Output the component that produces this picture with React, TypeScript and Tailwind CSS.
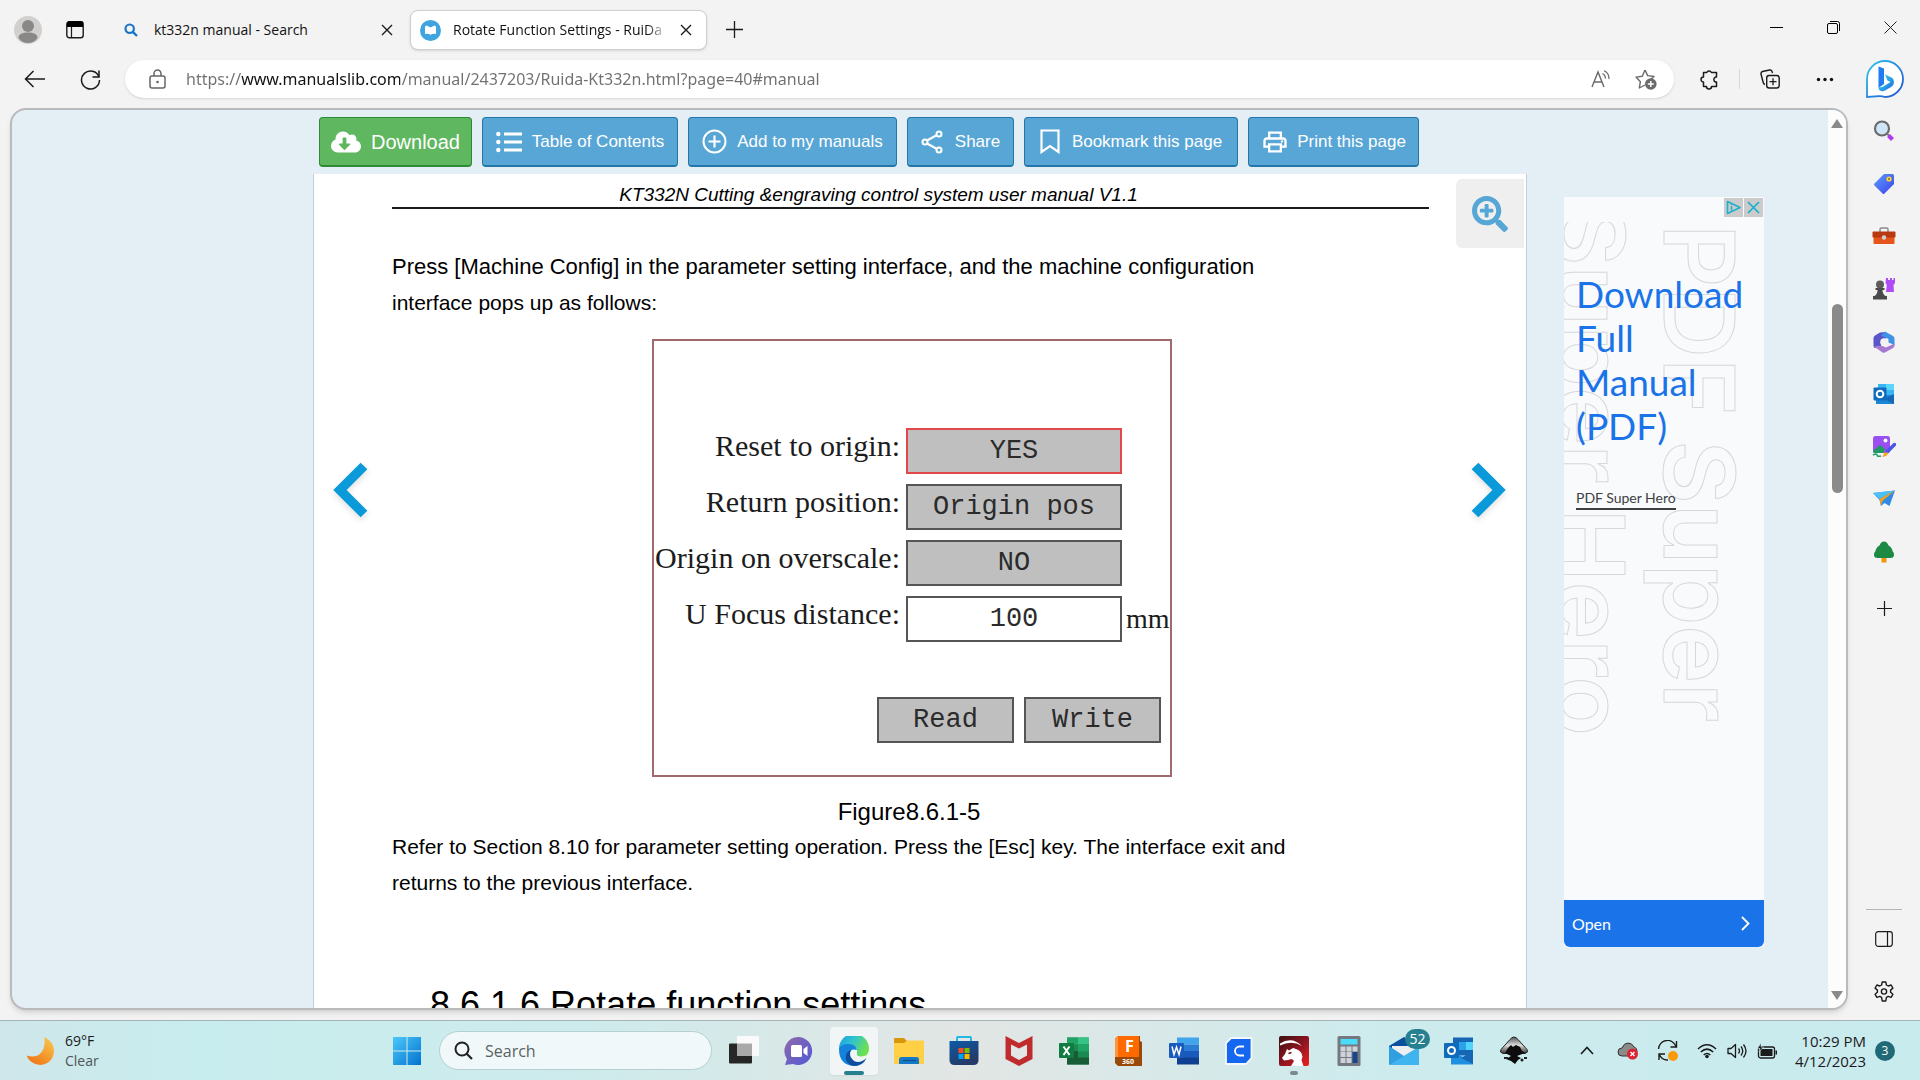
import type { ReactNode } from "react";
import { FaCloudDownloadAlt, FaSearchPlus } from "react-icons/fa";
import { MdOutlinePrint } from "react-icons/md";

function Svg({ w, h = w, children }: { w: number; h?: number; children: ReactNode }) {
  return (
    <svg width={w} height={h} viewBox={`0 0 ${w} ${h}`} fill="none" aria-hidden="true" className="shrink-0">
      {children}
    </svg>
  );
}

/* ---------- browser chrome ---------- */

function CloseIcon() {
  return (
    <Svg w={12}>
      <path d="M1 1l10 10M11 1L1 11" stroke="#1b1b1b" strokeWidth="1.4" />
    </Svg>
  );
}

function TabStrip() {
  return (
    <header className="flex h-14 shrink-0 items-start">
      <button type="button" aria-label="Profile" className="mt-4 ml-3.5">
        <Svg w={28}>
          <circle cx="14" cy="14" r="14" fill="#d2d0ce" />
          <circle cx="14" cy="10" r="6" fill="#8a8886" />
          <path d="M4.5 22c0-4 4-5.500 9.500-5.500s9.500 1.500 9.500 5.500c-2 3.500-5.500 5-9.500 5s-7.500-1.500-9.500-5z" fill="#8a8886" />
        </Svg>
      </button>
      <button type="button" aria-label="Tab actions" className="mt-5 ml-6">
        <Svg w={18} h={19}>
          <rect x="0.8" y="1.800" width="16.400" height="16" rx="2.500" stroke="#1b1b1b" strokeWidth="1.4" />
          <path d="M1 3.500Q1 1 3.500 1h11Q17 1 17 3.500V7H1z" fill="#000" />
          <path d="M5.500 7v11" stroke="#1b1b1b" strokeWidth="1.2" />
        </Svg>
      </button>

      <div className="mt-2.5 flex h-10 w-[326px] items-center pr-[17px] pl-10">
        <Svg w={14}>
          <circle cx="5.700" cy="5.700" r="4.200" stroke="#1a74c9" strokeWidth="2.200" />
          <path d="M8.800 8.800l4.200 4.200" stroke="#1a74c9" strokeWidth="2.400" />
        </Svg>
        <span className="ml-4 flex-1 text-sm whitespace-nowrap">kt332n manual - Search</span>
        <button type="button" aria-label="Close tab">
          <CloseIcon />
        </button>
      </div>

      <div className="mt-2.5 flex h-10 w-[297px] items-center rounded-lg border border-[#cfcfcf] bg-white px-[9px] shadow-sm">
        <Svg w={21}>
          <circle cx="10.500" cy="10.500" r="10.500" fill="#3fa4e0" />
          <path d="M5 6.500l1.500-1 4 2 4-2 1.500 1V14q-3-.8-5.500.8Q8 13.200 5 14z" fill="#fff" />
        </Svg>
        <span className="ml-3 flex-1 overflow-hidden text-sm font-medium whitespace-nowrap [mask-image:linear-gradient(to_right,#000_90%,transparent)]">
          Rotate Function Settings - RuiDa
        </span>
        <button type="button" aria-label="Close tab" className="mr-[5px] ml-3">
          <CloseIcon />
        </button>
      </div>
      <button type="button" aria-label="New tab" className="mt-[21px] ml-[19px]">
        <Svg w={17}>
          <path d="M8.500 0v17M0 8.500h17" stroke="#1b1b1b" strokeWidth="1.300" />
        </Svg>
      </button>

      <div className="mt-[21px] mr-[23px] ml-auto flex items-center gap-11">
        <button type="button" aria-label="Minimize">
          <Svg w={13}>
            <path d="M0 6.500h13" stroke="#000" />
          </Svg>
        </button>
        <button type="button" aria-label="Restore">
          <Svg w={13}>
            <rect x="0.500" y="2.500" width="10" height="10" rx="1.500" stroke="#000" />
            <path d="M3 .5h7.500q2 0 2 2V10" stroke="#000" />
          </Svg>
        </button>
        <button type="button" aria-label="Close window">
          <Svg w={13}>
            <path d="M.5.5l12 12M12.500.5l-12 12" stroke="#222" />
          </Svg>
        </button>
      </div>
    </header>
  );
}

function BingIcon() {
  return (
    <Svg w={38}>
      <defs>
        <linearGradient id="bingRing" x1="0" y1="0" x2="1" y2="1">
          <stop offset="0" stopColor="#2fc8f0" />
          <stop offset="1" stopColor="#1b4fd0" />
        </linearGradient>
        <linearGradient id="bingB" x1="0" y1="0" x2="1" y2="1">
          <stop offset="0" stopColor="#2ad0e0" />
          <stop offset="0.500" stopColor="#28a8e8" />
          <stop offset="1" stopColor="#1d5fe0" />
        </linearGradient>
      </defs>
      <path d="M1 37V19A18 18 0 1 1 19 37q-3-1-6-.8T1 37z" fill="#fff" stroke="url(#bingRing)" strokeWidth="1.800" />
      <path d="M12.500 6.500l5.500 2v15.500l-5.500 4z" fill="#1f7cf2" />
      <path d="M12.500 27.500c0 4 4 4.500 7 2.800l6-3.500c3.500-2.500 3-7.500 0-9.300l-6.500-3 2.500 6 3 1.500-8 5z" fill="url(#bingB)" />
    </Svg>
  );
}

function AddressBar() {
  return (
    <div className="flex h-[46px] shrink-0 items-center">
      <button type="button" aria-label="Back" className="ml-6">
        <Svg w={21} h={18}>
          <path d="M9.500 1L1.500 9l8 8M1.500 9H21" stroke="#1b1b1b" strokeWidth="1.500" />
        </Svg>
      </button>
      <button type="button" aria-label="Refresh" className="ml-[35px]">
        <Svg w={21}>
          <path d="M19 8A9 9 0 1 0 19.500 11" stroke="#1b1b1b" strokeWidth="1.500" />
          <path d="M19 1.500V8h-6.500" stroke="#1b1b1b" strokeWidth="1.500" />
        </Svg>
      </button>

      <div className="ml-6 flex h-[38px] flex-1 items-center rounded-full bg-white pr-[17px] pl-6 shadow-sm">
        <Svg w={17} h={20}>
          <rect x="1" y="7" width="15" height="12" rx="2" stroke="#666" strokeWidth="1.500" />
          <path d="M5 7V4.500a3.500 3.500 0 0 1 7 0V7" stroke="#666" strokeWidth="1.500" />
          <circle cx="8.500" cy="13" r="1.300" fill="#666" />
        </Svg>
        <input
          aria-label="Address"
          readOnly
          value="https://www.manualslib.com/manual/2437203/Ruida-Kt332n.html?page=40#manual"
          className="ml-5 min-w-0 flex-1 bg-[linear-gradient(to_right,#707070_55px,#111_55px,#111_214px,#707070_214px)] bg-clip-text font-['Noto_Sans',sans-serif] text-base text-transparent outline-none"
        />
        <button type="button" aria-label="Read aloud" className="mr-6">
          <Svg w={20} h={18}>
            <path d="M1 17L7 2l6 15M3 12h8" stroke="#6a6a6a" strokeWidth="1.400" />
            <path d="M11.500 3.500q3 1.500 3 5M13 .8q5 2 5 8.200" stroke="#6a6a6a" strokeWidth="1.200" />
          </Svg>
        </button>
        <button type="button" aria-label="Add to favorites">
          <Svg w={22} h={21}>
            <path d="M10 1l2.700 5.600 6.300.9-3 2.800M10 16l-5.700 3 1.100-6.300L1 8.100l6.300-.9L10 1" stroke="#6a6a6a" strokeWidth="1.400" strokeLinejoin="round" />
            <circle cx="15.800" cy="15" r="5.800" fill="#6a6a6a" />
            <path d="M15.800 12v6M12.800 15h6" stroke="#fff" strokeWidth="1.400" />
          </Svg>
        </button>
      </div>

      <div className="ml-[25px] flex items-center">
        <button type="button" aria-label="Extensions">
          <Svg w={20} h={21}>
            <path
              d="M4.500 3.500h3.300a2.500 2.500 0 0 1 4.600 0H17.500V8h-.8a2.600 2.600 0 0 0 0 5h.8v4.500h-5a2.500 2.500 0 0 1-5 0h-3V13a2.500 2.500 0 0 1 0-5z"
              stroke="#1b1b1b"
              strokeWidth="1.500"
              strokeLinejoin="round"
            />
          </Svg>
        </button>
        <span className="ml-5 h-5 w-px bg-[#d8d8d8]" />
        <button type="button" aria-label="Collections" className="ml-5">
          <Svg w={20}>
            <path d="M5 15.500Q3.500 15 3.200 13.500L1 5q-.3-2 1.500-2.500L9.500 1q2-.4 2.600 1.600l.4 1.400" stroke="#1b1b1b" strokeWidth="1.400" />
            <rect x="6.700" y="6.500" width="12.500" height="12.500" rx="2.500" stroke="#1b1b1b" strokeWidth="1.400" />
            <path d="M13 9.200v7M9.500 12.700h7" stroke="#1b1b1b" strokeWidth="1.300" />
          </Svg>
        </button>
        <button type="button" aria-label="More" className="ml-9">
          <Svg w={18} h={5}>
            <circle cx="2.500" cy="2.500" r="1.700" fill="#111" />
            <circle cx="9" cy="2.500" r="1.700" fill="#111" />
            <circle cx="15.500" cy="2.500" r="1.700" fill="#111" />
          </Svg>
        </button>
        <button type="button" aria-label="Bing chat" className="mr-4 ml-8">
          <BingIcon />
        </button>
      </div>
    </div>
  );
}

const sidebarApps: { name: string; icon: ReactNode }[] = [
  {
    name: "Search",
    icon: (
      <Svg w={22}>
        <circle cx="9" cy="8.500" r="7" fill="#cfe6f8" stroke="#6b6b6b" strokeWidth="2.200" />
        <path d="M13.500 13.500l2.500 2" stroke="#777" strokeWidth="2" />
        <path d="M15.500 15.500l4 4" stroke="#b13af0" strokeWidth="4" />
      </Svg>
    ),
  },
  {
    name: "Shopping",
    icon: (
      <Svg w={22}>
        <defs>
          <linearGradient id="tag" x1="0" y1="0" x2="1" y2="1">
            <stop stopColor="#5aa0f8" />
            <stop offset="1" stopColor="#3d3ff0" />
          </linearGradient>
        </defs>
        <path d="M11 1h8.500q1.500 0 1.500 1.500V11L11.500 20.500q-1 1-2 0l-8-8q-1-1 0-2z" fill="url(#tag)" />
        <circle cx="16" cy="6" r="2.600" fill="#ffd23c" />
        <circle cx="16" cy="6" r="1" fill="#7a7020" />
      </Svg>
    ),
  },
  {
    name: "Tools",
    icon: (
      <Svg w={24} h={22}>
        <path d="M8 7V4.500Q8 3 9.500 3h5Q16 3 16 4.500V7" stroke="#8b8b8b" strokeWidth="1.500" />
        <rect x="1.500" y="9" width="21" height="10" rx="1" fill="#e4541b" />
        <rect x="0.500" y="6.500" width="23" height="6" rx="1" fill="#b83810" />
        <circle cx="12" cy="12.500" r="2.200" fill="#d0d0d0" />
      </Svg>
    ),
  },
  {
    name: "Games",
    icon: (
      <Svg w={24}>
        <path d="M14 1h2v2h2V1h2v2h1.500V1H23v5l-1.500 2 .5 7h-8l.8-7L13.500 6z" fill="#b04cf5" />
        <circle cx="8" cy="7.500" r="4" fill="#5c5c5c" />
        <path d="M3.500 11h9v2h-2q0 4 3 6H15v3.500H1V19h1.500q3-2 3-6h-2z" fill="#4a4a4a" />
      </Svg>
    ),
  },
  {
    name: "Microsoft 365",
    icon: (
      <Svg w={22}>
        <path d="M7 1.500L13 1v7L8 10.500V15l-6.500 2Q.5 16 .5 14.500V7q0-1.500 1.500-2.500z" fill="#5a55c8" />
        <path d="M12 .5l8 4.500q1.500 1 1.500 2.500V14l-6-2.500V8L8 4.500z" fill="#3f92e6" />
        <path d="M1 15.500l7-1 5 2 8.500-4v2.500q0 1-1.500 2l-8 4.500q-1.500.7-2.500 0z" fill="#a77ad2" />
        <circle cx="11" cy="11" r="3.800" fill="#f3f3f3" />
      </Svg>
    ),
  },
  {
    name: "Outlook",
    icon: (
      <Svg w={22}>
        <rect x="5" y="1" width="16" height="13" fill="#37b6f2" />
        <rect x="13" y="1" width="8" height="6" fill="#5ad6fb" />
        <path d="M3 12h18v9H3z" fill="#1a86d6" />
        <path d="M21 11v10L11 16z" fill="#1368b8" />
        <rect x="0.500" y="4.500" width="13" height="13" rx="1" fill="#0f6cbd" />
        <circle cx="7" cy="11" r="3.300" stroke="#fff" strokeWidth="2" />
      </Svg>
    ),
  },
  {
    name: "Image Creator",
    icon: (
      <Svg w={24}>
        <rect x="1" y="1" width="17" height="17" rx="2.500" fill="#9a4ff0" />
        <path d="M1 16l7-6 5 4-2 4H3q-2 0-2-2z" fill="#1e9a63" />
        <circle cx="13.500" cy="5.500" r="2" fill="#fff" />
        <path d="M22.500 9.500L15 17" stroke="#4a55e8" strokeWidth="3.500" strokeLinecap="round" />
        <path d="M16 17.500q0 4-6 4.500 2-2 2-4.500z" fill="#f5a81c" />
        <path d="M1 20q4-2 4 0t4 1" stroke="#1e9a63" strokeWidth="1.500" />
      </Svg>
    ),
  },
  {
    name: "Drop",
    icon: (
      <Svg w={22} h={20}>
        <path d="M0 4l22-2.500-5.500 15.500-5-3-3.500 3-1.500-6z" fill="#2f8ae8" />
        <path d="M0 4l22-2.500L6.500 10z" fill="#4cc2f4" />
        <path d="M22 1.500L6.500 10 8 17l1.500-5z" fill="#f0a020" />
      </Svg>
    ),
  },
  {
    name: "E-tree",
    icon: (
      <Svg w={22}>
        <rect x="8.500" y="15" width="5" height="6.500" fill="#f0950e" />
        <path d="M11 .5q3 0 4.500 4 3.500 2 4 5.500 2 2 1.500 4.500-.5 2.500-3.500 2.500h-13Q1.500 17 1 14.500.5 12 2.500 10 3 6.500 6.500 4.500 8 .5 11 .5z" fill="#1d8a43" />
      </Svg>
    ),
  },
];

function Sidebar() {
  return (
    <aside className="flex w-[72px] shrink-0 flex-col items-center pt-[3px]">
      <div className="flex h-[473px] flex-col self-stretch">
        {sidebarApps.map((app) => (
          <button key={app.name} type="button" aria-label={app.name} className="flex flex-1 items-center justify-center">
            {app.icon}
          </button>
        ))}
      </div>
      <button type="button" aria-label="Customize" className="flex h-[60px] items-center">
        <Svg w={15}>
          <path d="M7.500 0v15M0 7.500h15" stroke="#1b1b1b" strokeWidth="1.200" />
        </Svg>
      </button>
      <span className="mt-auto h-px w-9 bg-[#b4b4b4]" />
      <button type="button" aria-label="Hide sidebar" className="flex h-[58px] items-center">
        <Svg w={18} h={16}>
          <rect x="0.700" y="0.700" width="16.600" height="14.600" rx="2.500" stroke="#1b1b1b" strokeWidth="1.200" />
          <path d="M12.500 1v14" stroke="#1b1b1b" strokeWidth="1.200" />
        </Svg>
      </button>
      <button type="button" aria-label="Settings" className="mb-1 flex h-12 items-center">
        <Svg w={22}>
          <path
            d="M9.200 1h3.600l.6 3 1.800 1 2.900-1 1.800 3.100-2.300 2v2.200l2.300 2-1.800 3.100-2.900-1-1.800 1-.6 3.600H9.200l-.6-3.600-1.800-1-2.900 1-1.800-3.100 2.300-2V9.100l-2.300-2L3.900 4l2.900 1 1.800-1z"
            stroke="#1b1b1b"
            strokeWidth="1.400"
            strokeLinejoin="round"
          />
          <circle cx="11" cy="10.500" r="2.600" stroke="#1b1b1b" strokeWidth="1.400" />
        </Svg>
      </button>
    </aside>
  );
}

/* ---------- manual page ---------- */

function ManualToolbar() {
  const blue =
    "flex h-[50px] items-center justify-center rounded border border-b-2 border-[#2476a8] bg-[#58a6d6] text-[17px] whitespace-nowrap text-white";
  return (
    <nav className="flex gap-2.5 px-1.5 pt-[7px] pb-[7px]">
      <a
        href="#download"
        className="flex h-[50px] w-[153px] items-center justify-center gap-2.5 rounded border border-b-2 border-[#2f8a35] bg-[#5fb760] text-xl text-white"
      >
        <FaCloudDownloadAlt className="size-[30px]" />
        Download
      </a>
      <a href="#toc" className={`${blue} w-[196px] gap-2.5`}>
        <Svg w={26} h={22}>
          <path d="M8 3h18M8 11h18M8 19h18" stroke="#fff" strokeWidth="3" />
          <circle cx="2.300" cy="3" r="2.200" fill="#fff" />
          <circle cx="2.300" cy="11" r="2.200" fill="#fff" />
          <circle cx="2.300" cy="19" r="2.200" fill="#fff" />
        </Svg>
        Table of Contents
      </a>
      <a href="#add" className={`${blue} w-[209px] gap-2.5`}>
        <Svg w={25}>
          <circle cx="12.500" cy="12.500" r="11" stroke="#fff" strokeWidth="2" />
          <path d="M12.500 6.500v12M6.500 12.500h12" stroke="#fff" strokeWidth="2.200" />
        </Svg>
        Add to my manuals
      </a>
      <a href="#share" className={`${blue} w-[107px] gap-3`}>
        <Svg w={22} h={24}>
          <path d="M16 5L6 10.500M6 13.500L16 19" stroke="#fff" strokeWidth="2" />
          <circle cx="18" cy="4" r="2.500" stroke="#fff" strokeWidth="2" />
          <circle cx="4" cy="12" r="2.500" stroke="#fff" strokeWidth="2" />
          <circle cx="18" cy="20" r="2.500" stroke="#fff" strokeWidth="2" />
        </Svg>
        Share
      </a>
      <a href="#bookmark" className={`${blue} w-[214px] gap-3`}>
        <Svg w={20} h={25}>
          <path d="M1.500 1.500h17V23L10 17l-8.500 6z" stroke="#fff" strokeWidth="2.200" />
        </Svg>
        Bookmark this page
      </a>
      <a href="#print" className={`${blue} w-[171px] gap-2`}>
        <MdOutlinePrint className="size-7" />
        Print this page
      </a>
    </nav>
  );
}

const configRows = [
  { id: "reset", label: "Reset to origin:", value: "YES" },
  { id: "return", label: "Return position:", value: "Origin pos" },
  { id: "overscale", label: "Origin on overscale:", value: "NO" },
];

const fieldBase =
  "h-[46px] shrink-0 border-2 text-center font-['Liberation_Mono',monospace] text-[27px] leading-9 text-[#2b2b2b]";
const labelBase = "w-[246px] shrink-0 text-right text-[30px] leading-9 whitespace-nowrap";

function MachineConfigFigure() {
  return (
    <figure className="mt-[18px] ml-[260px] w-[520px]">
      <div className="flex h-[438px] flex-col border-2 border-[#a06a6a] pt-[87px] font-['Liberation_Serif',serif] text-[#1c1c1c]">
        <div className="flex flex-col gap-2.5">
          {configRows.map((row) => (
            <div key={row.id} className="flex gap-1.5">
              <label htmlFor={row.id} className={labelBase}>
                {row.label}
              </label>
              <button
                id={row.id}
                type="button"
                className={`${fieldBase} w-[216px] bg-[#bfbfbf] ${row.value === "YES" ? "border-[#e0484c]" : "border-[#555]"}`}
              >
                {row.value}
              </button>
            </div>
          ))}
          <div className="flex gap-1.5">
            <label htmlFor="focus" className={labelBase}>
              U Focus distance:
            </label>
            <input id="focus" defaultValue="100" className={`${fieldBase} w-[216px] border-[#555] bg-white`} />
            <span className="-ml-0.5 self-center text-[28px] leading-9">mm</span>
          </div>
        </div>
        <div className="mt-[55px] flex justify-end gap-2.5 pr-[9px]">
          <button type="button" className={`${fieldBase} w-[137px] border-[#555] bg-[#bfbfbf]`}>
            Read
          </button>
          <button type="button" className={`${fieldBase} w-[137px] border-[#555] bg-[#bfbfbf]`}>
            Write
          </button>
        </div>
      </div>
      <figcaption className="mt-[17px] pr-1.5 text-center text-2xl leading-[35px]">Figure8.6.1-5</figcaption>
    </figure>
  );
}

function PageArrow({ d, label }: { d: string; label: string }) {
  return (
    <a href="#manual" aria-label={label} className="drop-shadow-md">
      <Svg w={36} h={56}>
        <path d={d} stroke="#0a9ad9" strokeWidth="9.500" />
      </Svg>
    </a>
  );
}

function ManualPage() {
  return (
    <article className="flex flex-1 border-x border-[#c6cfd6] bg-white text-black">
      <div className="flex w-[78px] shrink-0 justify-center pt-[288px] pr-1">
        <PageArrow d="M31 4L7 28l24 24" label="Previous page" />
      </div>
      <div className="min-w-0 flex-1">
        <p className="border-b-2 border-[#1a1a1a] pt-2 pr-16 text-center text-[19px] leading-[25px] italic">
          KT332N Cutting &amp;engraving control system user manual V1.1
        </p>
        <p className="mt-10 text-[22px] leading-9 whitespace-nowrap">
          Press [Machine Config] in the parameter setting interface, and the machine configuration
        </p>
        <p className="text-[21px] leading-9">interface pops up as follows:</p>
        <MachineConfigFigure />
        <p className="text-[21px] leading-9">
          Refer to Section 8.10 for parameter setting operation. Press the [Esc] key. The interface exit and
          <br />
          returns to the previous interface.
        </p>
        <h2 className="mt-[84px] pl-[38px] text-4xl leading-10">8.6.1.6 Rotate function settings</h2>
      </div>
      <div className="flex w-[97px] shrink-0 flex-col items-end pt-[5px] pr-0.5">
        <button
          type="button"
          aria-label="Zoom in"
          className="flex h-[69px] w-[68px] items-center justify-center rounded-l-md bg-[#efefef]"
        >
          <FaSearchPlus className="size-9 text-[#56a6d6]" />
        </button>
        <div className="pt-[214px] pr-[18px]">
          <PageArrow d="M5 4l24 24L5 52" label="Next page" />
        </div>
      </div>
    </article>
  );
}

function Advert() {
  const ghost =
    "absolute font-['Inter',sans-serif] text-[98px] leading-none font-semibold whitespace-nowrap text-transparent [-webkit-text-stroke:1px_#d6d8db] [writing-mode:vertical-rl]";
  return (
    <section
      aria-label="Advertisement"
      className="mt-[87px] ml-[37px] flex h-[750px] w-[200px] flex-col bg-[#f9fafc] font-['Lato',sans-serif]"
    >
      <div className="relative flex-1 overflow-hidden">
        <div aria-hidden="true" className="absolute inset-x-0 top-[25px] bottom-0 overflow-hidden">
          <span className={`${ghost} top-0.5 left-[86px]`}>PDF Super</span>
          <span className={`${ghost} -top-5 -left-6`}>Super Hero</span>
        </div>
        <div className="absolute top-px right-px flex gap-px">
          <button type="button" aria-label="Ad choices" className="flex size-[19px] items-center justify-center bg-[#cbcbcb]">
            <Svg w={15}>
              <path d="M1.500 1.500v12l12.500-6z" stroke="#1fb0cc" strokeWidth="1.600" strokeLinejoin="round" />
              <path d="M5.500 6v4.500M5.500 4v1" stroke="#1fb0cc" strokeWidth="1.500" />
            </Svg>
          </button>
          <button type="button" aria-label="Close ad" className="flex size-[19px] items-center justify-center bg-[#cbcbcb]">
            <Svg w={13}>
              <path d="M1 1l11 11M12 1L1 12" stroke="#12b0cf" strokeWidth="1.600" />
            </Svg>
          </button>
        </div>
        <div className="relative px-3 pt-[75px]">
          <a href="#ad" className="block text-[37px] leading-11 text-[#1a73e8]">
            Download
            <br />
            Full
            <br />
            Manual
            <br />
            (PDF)
          </a>
          <a href="#advertiser" className="mt-10 inline-block border-b-2 border-[#3c4043] text-sm leading-5 text-[#3c4043]">
            PDF Super Hero
          </a>
        </div>
      </div>
      <a href="#open" className="flex h-[47px] items-center justify-between rounded-b-md bg-[#1a73e8] pr-3.5 pl-2 text-base text-white">
        Open
        <Svg w={9} h={15}>
          <path d="M1 1l6.500 6.500L1 14" stroke="#fff" strokeWidth="1.800" />
        </Svg>
      </a>
    </section>
  );
}

function Viewport() {
  return (
    <main className="mt-1.5 mb-2.5 ml-2.5 flex min-w-0 flex-1 overflow-hidden rounded-2xl border-2 border-[#b9babc] bg-[#e4eef5] font-['Liberation_Sans',sans-serif] shadow-md">
      <div className="flex min-w-0 flex-1">
        <div className="flex-1" />
        <div className="flex w-[1214px] shrink-0 flex-col">
          <ManualToolbar />
          <ManualPage />
        </div>
        <div className="flex-1">
          <Advert />
        </div>
      </div>
      <div className="flex w-[18px] shrink-0 flex-col items-center bg-[#fcfcfc] pt-[9px] pb-2">
        <Svg w={12} h={9}>
          <path d="M6 0l6 9H0z" fill="#8a8a8a" />
        </Svg>
        <div className="mt-44 h-[189px] w-[11px] rounded-full bg-[#8a8a8a]" />
        <div className="mt-auto">
          <Svg w={12} h={9}>
            <path d="M6 9l6-9H0z" fill="#8a8a8a" />
          </Svg>
        </div>
      </div>
    </main>
  );
}

/* ---------- taskbar ---------- */

const taskbarApps: { name: string; active?: boolean; running?: boolean; badge?: string; icon: ReactNode }[] = [
  {
    name: "Task view",
    icon: (
      <Svg w={32}>
        <rect x="1" y="8.500" width="23" height="20" rx="1" fill="#262626" />
        <rect x="9" y="1" width="22" height="20" rx="1" fill="#fafafa" />
        <rect x="9" y="8.500" width="15" height="12.500" fill="#a9a9a9" />
      </Svg>
    ),
  },
  {
    name: "Chat",
    icon: (
      <Svg w={30}>
        <defs>
          <linearGradient id="chat" x1="0" y1="0" x2="1" y2="1">
            <stop stopColor="#8f6aa8" />
            <stop offset="1" stopColor="#5059d8" />
          </linearGradient>
        </defs>
        <path d="M15 1a14 14 0 1 1-6 27L1 29l2-6A14 14 0 0 1 15 1z" fill="url(#chat)" />
        <rect x="7" y="9" width="11" height="12" rx="1.500" fill="#fff" />
        <path d="M19.500 13l4-3v10l-4-3z" fill="#fff" />
      </Svg>
    ),
  },
  {
    name: "Microsoft Edge",
    active: true,
    icon: (
      <Svg w={30}>
        <defs>
          <linearGradient id="edgeTop" x1="0" y1="0" x2="1" y2="0.400">
            <stop stopColor="#1b9de0" />
            <stop offset="0.500" stopColor="#2fc3cf" />
            <stop offset="1" stopColor="#6be052" />
          </linearGradient>
        </defs>
        <path d="M0 13A15 15 0 0 1 30 12.500q0 8-8 8-5 0-4-4 1-6-6-7-6 0-12 3.500z" fill="url(#edgeTop)" />
        <path d="M0 13Q2 8 9 8q8 0 9 6-7-2-7.500 4Q11 27 20 28.500q-2 1.500-5 1.500Q0 29 0 13z" fill="#1583dc" />
        <path d="M12 14q-3 6 3 11 6 3 12.500-3Q24 30 15 30 5 28 7 19q1-4 5-5z" fill="#0d4f9e" />
        <path d="M18 14.500q-6-2-6 3.500.5 4 5 5.500 6 1 11-2.500-4 1.500-8 .5-4-2-2-7z" fill="#f1f6f6" />
      </Svg>
    ),
  },
  {
    name: "File Explorer",
    icon: (
      <Svg w={30} h={28}>
        <path d="M0 1.500Q0 1 1 1h9l3 3v5H0z" fill="#d8960c" />
        <path d="M0 6h10l3-2.500h16q1 0 1 1V26q0 1-1 1H1q-1 0-1-1z" fill="#ffcf45" />
        <path d="M5 27v-4.500q0-2.500 2.500-2.500h15q2.500 0 2.500 2.500V27z" fill="#1579c8" />
        <path d="M9 23.500h13" stroke="#0c4f90" strokeWidth="1.200" />
      </Svg>
    ),
  },
  {
    name: "Microsoft Store",
    icon: (
      <Svg w={30}>
        <defs>
          <linearGradient id="store" x1="0" y1="0" x2="0.500" y2="1">
            <stop stopColor="#0d5aa8" />
            <stop offset="1" stopColor="#253a66" />
          </linearGradient>
        </defs>
        <path d="M8 7V2q0-1 1-1h12q1 0 1 1v5" stroke="#22b8e8" strokeWidth="2" />
        <path d="M.5 5h29v19q0 5-5 5h-19q-5 0-5-5z" fill="url(#store)" />
        <rect x="9.500" y="12" width="5" height="5" fill="#f25022" />
        <rect x="15.500" y="12" width="5" height="5" fill="#7fba00" />
        <rect x="9.500" y="18" width="5" height="5" fill="#00a4ef" />
        <rect x="15.500" y="18" width="5" height="5" fill="#ffb900" />
      </Svg>
    ),
  },
  {
    name: "McAfee",
    icon: (
      <Svg w={28} h={30}>
        <path d="M.5 0L14 7 27.500 0v23L14 30 .5 23z" fill="#c02b2e" />
        <path d="M6 8.500l8 4 8-4v11L14 24l-8-4.500z" fill="#e1e7e7" />
      </Svg>
    ),
  },
  {
    name: "Excel",
    icon: (
      <Svg w={30} h={28}>
        <rect x="8" y="0.500" width="22" height="27" rx="1" fill="#1a8a50" />
        <path d="M19 .5h11v7H19z" fill="#36c486" />
        <path d="M8 .5h11v7H8zM19 7.500h11v7H19z" fill="#21a366" />
        <path d="M8 14h11v7H8z" fill="#185c37" />
        <path d="M8 20.500h22v7H8z" fill="#185c37" />
        <rect x="0" y="6" width="15" height="15" rx="1" fill="#107c41" />
        <path d="M4.500 9.500l6 8.500M10.500 9.500l-6 8.500" stroke="#fff" strokeWidth="2" />
      </Svg>
    ),
  },
  {
    name: "Fusion 360",
    icon: (
      <Svg w={30}>
        <path d="M1 3l3-3h22v5l2 1v24H4l-3-3z" fill="#9a4a08" />
        <path d="M4 0h21v21H1V3z" fill="#ff6a00" />
        <path d="M4 0v21H1V3z" fill="#ff9440" />
        <text x="11" y="16" fill="#fff" fontSize="16" fontWeight="700" fontFamily="Open Sans, sans-serif">F</text>
        <text x="8" y="28" fill="#fff" fontSize="7" fontWeight="700" fontFamily="Open Sans, sans-serif">360</text>
      </Svg>
    ),
  },
  {
    name: "Word",
    icon: (
      <Svg w={30} h={28}>
        <rect x="8" y="0.500" width="22" height="7" fill="#41a5ee" />
        <rect x="8" y="7.500" width="22" height="7" fill="#2b7cd3" />
        <rect x="8" y="14" width="22" height="7" fill="#185abd" />
        <rect x="8" y="20.500" width="22" height="7" fill="#103f91" />
        <rect x="0" y="6" width="15" height="15" rx="1" fill="#185abd" />
        <path d="M3 9.500l2 8 2.500-7.500 2.500 7.500 2-8" stroke="#fff" strokeWidth="1.500" />
      </Svg>
    ),
  },
  {
    name: "Cura",
    icon: (
      <Svg w={28}>
        <path d="M6 1h20.500v20l-5.500 6H1V6z" fill="#1467ee" stroke="#f4f8fa" strokeWidth="1.800" />
        <path d="M19 9.500h-4.500a4.500 4.500 0 0 0 0 9H19" stroke="#fff" strokeWidth="1.800" />
      </Svg>
    ),
  },
  {
    name: "LightBurn",
    running: true,
    icon: (
      <Svg w={30}>
        <defs>
          <linearGradient id="burn" x1="0" y1="0" x2="1" y2="1">
            <stop stopColor="#3b1010" />
            <stop offset="0.500" stopColor="#8a1420" />
            <stop offset="1" stopColor="#f02020" />
          </linearGradient>
        </defs>
        <rect width="30" height="30" rx="2" fill="url(#burn)" />
        <path d="M1 7.500Q13 0 23 10q-10-6-22-.5z" fill="#fff" />
        <path d="M3 22l3-4 2-5 2 1.500L14 12l3 1q6 2 6.500 8l-1 3 2 6H12l3-5-2-2-4 1-4 .500z" fill="#fff" />
        <path d="M9.500 17.500l3-1" stroke="#6a1218" strokeWidth="1.500" />
      </Svg>
    ),
  },
  {
    name: "Calculator",
    icon: (
      <Svg w={24} h={30}>
        <rect x="0.500" width="23" height="30" rx="1.500" fill="#74797f" />
        <rect x="3.500" y="3" width="17" height="5.500" fill="#4adcf8" />
        <path d="M3.500 10.500h5v5h-5zM9.500 10.500h5v5h-5zM15.500 10.500h5v5h-5zM3.500 16h5v5h-5zM9.500 16h5v5h-5zM3.500 22h5v5h-5zM9.500 22h5v5h-5z" fill="#ced3da" />
        <path d="M15.500 16h5v11h-5z" fill="#17468f" />
      </Svg>
    ),
  },
  {
    name: "Mail",
    badge: "52",
    icon: (
      <Svg w={30} h={28}>
        <path d="M0 9L15 0l15 9v10H0z" fill="#0c4f9e" />
        <path d="M3 9h24v8l-12 5L3 14z" fill="#eceef0" />
        <path d="M0 9l15 10L30 10v17q0 1-1 1H1q-1 0-1-1z" fill="#2f9fe0" />
        <path d="M0 28L30 10v18z" fill="#40b4ee" />
      </Svg>
    ),
  },
  {
    name: "Outlook",
    icon: (
      <Svg w={30} h={28}>
        <rect x="9" y="0.500" width="20" height="18" fill="#1566b5" />
        <rect x="15" y="5" width="8" height="8" fill="#2aa3ea" />
        <rect x="22" y="5" width="7" height="8" fill="#50d4fb" />
        <path d="M7 14l12 6 10-6v13.500H7z" fill="#1f8fe0" />
        <path d="M29 14v13L17 21z" fill="#1467b5" />
        <rect x="0" y="6" width="15" height="15" rx="1" fill="#0f6cbd" />
        <circle cx="7.500" cy="13.500" r="3.500" stroke="#fff" strokeWidth="2" />
      </Svg>
    ),
  },
  {
    name: "Inkscape",
    icon: (
      <Svg w={30}>
        <defs>
          <linearGradient id="ink" x1="0" y1="0" x2="0" y2="1">
            <stop stopColor="#555" />
            <stop offset="0.500" stopColor="#ddd" />
            <stop offset="1" stopColor="#333" />
          </linearGradient>
        </defs>
        <path d="M15 1q2 0 4 2.500l9 10q2 3-2 4H4q-4-1-2-4L11 3.500Q13 1 15 1z" fill="url(#ink)" stroke="#222" />
        <path d="M9 12l3-3 2 2 3-2 4 2 2 4 3 2-8 3 4 2-3 2-3 4-4-3-5-2 5-3-6-3z" fill="#0c0c0c" />
        <circle cx="23" cy="24" r="1.500" fill="#222" />
        <path d="M5 21h4v2H5zM25 21h3v2h-3z" fill="#222" />
      </Svg>
    ),
  },
];

function TaskbarApps() {
  return (
    <div className="flex h-full items-center">
      <button type="button" aria-label="Start" className="flex h-12 w-[54px] items-center justify-center">
        <Svg w={30}>
          <defs>
            <linearGradient id="win" x1="0" y1="0" x2="1" y2="1">
              <stop stopColor="#4cc8f8" />
              <stop offset="1" stopColor="#0272d0" />
            </linearGradient>
          </defs>
          <path d="M1 1h13.500v13.500H1zM15.500 1H29v13.500H15.500zM1 15.500h13.500V29H1zM15.500 15.500H29V29H15.500z" fill="url(#win)" />
        </Svg>
      </button>
      <label className="mr-1 ml-[5px] flex h-[39px] w-[273px] items-center gap-3 rounded-full border border-[#b5cfd2] bg-[#f0f8f9] px-3.5">
        <Svg w={19}>
          <circle cx="8" cy="8" r="6.500" stroke="#222" strokeWidth="2" />
          <path d="M12.500 12.500l5.500 5.500" stroke="#222" strokeWidth="2.200" />
        </Svg>
        <input aria-label="Search" placeholder="Search" className="min-w-0 flex-1 text-base outline-none placeholder:text-[#5b6263]" />
      </label>
      {taskbarApps.map((app) => (
        <div key={app.name} className="flex w-[55px] justify-center">
          <button
            type="button"
            aria-label={app.name}
            className={`relative flex size-12 items-center justify-center rounded ${app.active ? "bg-[#f1f5f5] shadow-xs" : ""}`}
          >
            {app.icon}
            {app.badge && (
              <span className="absolute top-0.5 -right-0.5 rounded-full bg-[#27808f] px-1 text-sm leading-5 text-white">{app.badge}</span>
            )}
            {app.active && <span className="absolute bottom-0 h-1 w-5 rounded-full bg-[#27808f]" />}
            {app.running && <span className="absolute bottom-0 h-1 w-2 rounded-full bg-[#7b8a8c]" />}
          </button>
        </div>
      ))}
    </div>
  );
}

function Tray() {
  return (
    <div className="flex flex-1 items-center justify-end pr-[25px]">
      <button type="button" aria-label="Show hidden icons">
        <Svg w={14} h={9}>
          <path d="M1 8l6-6.500L13 8" stroke="#1b1b1b" strokeWidth="1.600" />
        </Svg>
      </button>
      <button type="button" aria-label="OneDrive" className="ml-[23px]">
        <Svg w={22} h={18}>
          <path d="M5 14q-4 0-4-4t4-4q2-5 6-5t6 4q3 1 3 4t-3 5z" fill="#8b8b8b" stroke="#333" />
          <circle cx="15.500" cy="12" r="5.500" fill="#dd2330" />
          <path d="M13.500 10l4 4M17.500 10l-4 4" stroke="#fff" strokeWidth="1.400" />
        </Svg>
      </button>
      <button type="button" aria-label="Updates" className="ml-[18px]">
        <Svg w={22}>
          <path d="M1.500 9A9 9 0 0 1 19 6.500M19.500 1v6h-6M2 20v-6h6M2 14q3 6.500 9 6" stroke="#1b1b1b" strokeWidth="1.400" />
          <circle cx="16" cy="16" r="5" fill="#fb9a0a" />
        </Svg>
      </button>
      <button type="button" aria-label="Network, volume and battery" className="ml-[18px] flex items-center gap-2.5">
        <Svg w={20} h={16}>
          <path d="M1 6q9-8.500 18 0M3.800 9q6.200-5.800 12.400 0M6.700 12q3.300-3 6.600 0" stroke="#1b1b1b" strokeWidth="1.500" />
          <circle cx="10" cy="13.500" r="1.800" fill="#1b1b1b" />
        </Svg>
        <Svg w={20} h={16}>
          <path d="M1 5.500h3L8.500 1.500v13L4 10.500H1z" stroke="#1b1b1b" strokeWidth="1.300" strokeLinejoin="round" />
          <path d="M11.500 5.500q2 2.500 0 5M14 3.500q3.500 4.500 0 9M16.500 1.500q5 6.500 0 13" stroke="#1b1b1b" strokeWidth="1.300" />
        </Svg>
        <Svg w={21} h={16}>
          <rect x="1.500" y="4" width="16" height="11" rx="2" stroke="#1b1b1b" strokeWidth="1.300" />
          <rect x="3.500" y="6" width="12" height="7" rx="0.500" fill="#1b1b1b" />
          <path d="M18.500 7.500h1.500v4h-1.500z" fill="#1b1b1b" />
          <path d="M4 0L.5 5.500H3L2 9l4.500-5H4z" fill="#1b1b1b" stroke="#cbecee" strokeWidth="0.600" />
        </Svg>
      </button>
      <button type="button" className="ml-[17px] text-right text-[15px] leading-5 text-[#1a1a1a]">
        10:29 PM
        <br />
        4/12/2023
      </button>
      <span className="ml-[9px] flex size-5 items-center justify-center rounded-full bg-[#206a78] text-xs text-white">3</span>
    </div>
  );
}

function Taskbar() {
  return (
    <footer className="flex h-[60px] shrink-0 border-t border-[#a3b3b6] bg-[linear-gradient(to_right,#cfe6ea,#c8edee_10%,#cdebec_30%,#e2e6e4_50%,#cdebed_72%,#c8ebee)]">
      <div className="flex flex-1 items-center gap-2.5 pl-[26px] text-sm">
        <Svg w={29} h={30}>
          <defs>
            <linearGradient id="moon" x1="1" y1="0" x2="0.300" y2="1">
              <stop stopColor="#f8cc50" />
              <stop offset="1" stopColor="#f07818" />
            </linearGradient>
          </defs>
          <path d="M18.500 1Q28 6 28 15q-1 13-14 14Q4 28 .5 19.500 13 23 17.500 13q2-6 1-12z" fill="url(#moon)" />
        </Svg>
        <div className="leading-5">
          <p className="text-[#1a1a1a]">69°F</p>
          <p className="text-[#4e5657]">Clear</p>
        </div>
      </div>
      <TaskbarApps />
      <Tray />
    </footer>
  );
}

export default function App() {
  return (
    <div className="flex h-screen flex-col overflow-hidden bg-[#f3f3f3] font-['Open_Sans',sans-serif] text-[#111]">
      <TabStrip />
      <AddressBar />
      <div className="flex min-h-0 flex-1">
        <Viewport />
        <Sidebar />
      </div>
      <Taskbar />
    </div>
  );
}
